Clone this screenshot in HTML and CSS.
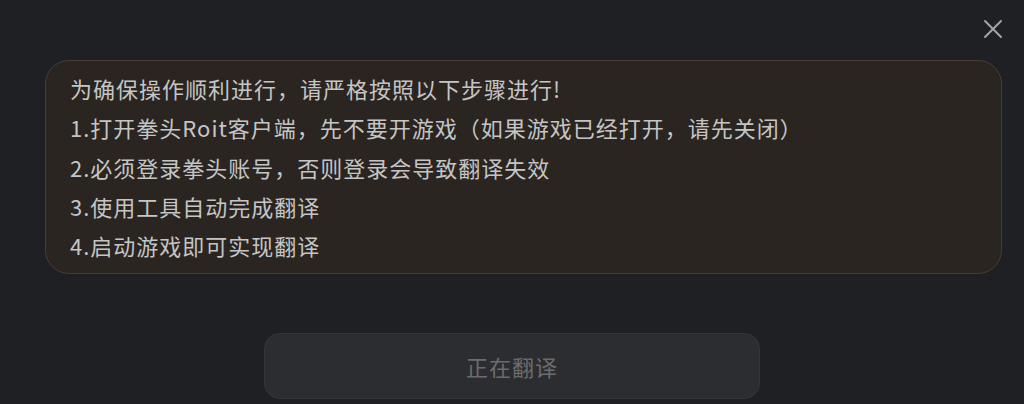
FILE: index.html
```html
<!DOCTYPE html>
<html lang="zh-CN">
<head>
  <meta charset="UTF-8">
  <meta name="viewport" content="width=device-width, initial-scale=1.0">
  <title>翻译</title>
  <link rel="stylesheet" href="styles.css">
</head>
<body>
  <div class="dialog">
    <div class="top-bar">
      <button class="close-btn" aria-label="关闭">
        <svg width="20" height="20" viewBox="0 0 20 20">
          <path d="M2 2 L18 18 M18 2 L2 18" stroke="#a3a3a5" stroke-width="2" stroke-linecap="round" fill="none"/>
        </svg>
      </button>
    </div>
    <div class="notice">
      <p>为确保操作顺利进行，请严格按照以下步骤进行!</p>
      <p>1.打开拳头Roit客户端，先不要开游戏（如果游戏已经打开，请先关闭）</p>
      <p>2.必须登录拳头账号，否则登录会导致翻译失效</p>
      <p>3.使用工具自动完成翻译</p>
      <p>4.启动游戏即可实现翻译</p>
    </div>
    <div class="actions">
      <button class="translate-btn" disabled>正在翻译</button>
    </div>
  </div>
</body>
</html>
```

FILE: styles.css
```css
body {
  margin: 0;
  background: #1f2024;
  font-family: "Liberation Sans", "Noto Sans CJK SC", sans-serif;
  color: #c5c5c5;
  height: 404px;
  overflow: hidden;
}
.dialog {
  display: flex;
  flex-direction: column;
}
.top-bar {
  display: flex;
  justify-content: flex-end;
  height: 60px;
  padding-right: 20px;
  padding-top: 18px;
  box-sizing: border-box;
}
.close-btn {
  width: 22px;
  height: 22px;
  padding: 1px;
  background: none;
  border: none;
  cursor: pointer;
}
.notice {
  margin: 0 22px 0 45px;
  padding: 8px 24px 6px;
  height: 214px;
  box-sizing: border-box;
  background: #2a2521;
  border: 1px solid #4b3d2e;
  border-radius: 24px;
}
.notice p {
  margin: 0;
  font-family: "Noto Sans CJK SC", sans-serif;
  font-size: 22px;
  letter-spacing: 1px;
  line-height: 39.3px;
}
.actions {
  display: flex;
  justify-content: center;
  padding-top: 59px;
}
.translate-btn {
  width: 496px;
  height: 66px;
  background: #2c2d31;
  border: 1px solid #35363b;
  border-radius: 16px;
  color: #6c6c6e;
  font-family: "Noto Sans CJK SC", sans-serif;
  font-size: 22px;
  letter-spacing: 1px;
  padding-bottom: 2px;
}
```
